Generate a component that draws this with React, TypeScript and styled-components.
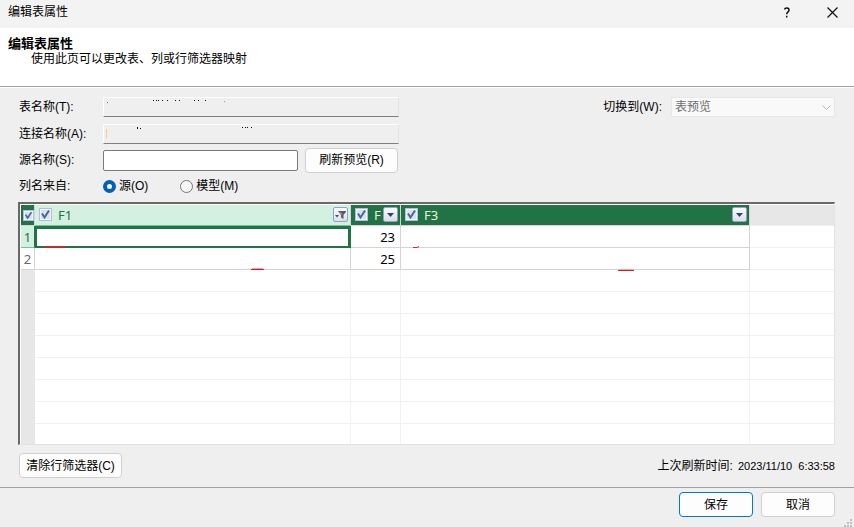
import React from "react";
import styled, { createGlobalStyle, css } from "styled-components";

const uiFont = '"Liberation Sans", "Noto Sans CJK SC", sans-serif';
const gridFont = '"Noto Sans", "Noto Sans CJK SC", sans-serif';
const green = "#217346";

const GlobalStyle = createGlobalStyle`
  *, *::before, *::after { box-sizing: border-box; }
  body { margin: 0; background: #efefef; }
  button, input, select { font: inherit; color: inherit; margin: 0; }
`;

const Dialog = styled.div`
  display: flex;
  flex-direction: column;
  height: 100vh;
  overflow: hidden;
  background: #efefef;
  color: #000;
  font: 12px/16px ${uiFont};
`;

const TitleBar = styled.header`
  display: flex;
  align-items: center;
  height: 28px;
  flex: none;
  padding: 0 10px 4px 8px;
  background: #f3f3f3;
`;

const Title = styled.span`
  flex: 1;
`;

const TitleButton = styled.button`
  display: grid;
  place-items: center;
  width: 24px;
  height: 24px;
  padding: 0;
  margin-left: 21px;
  border: 0;
  background: none;
`;

const Banner = styled.section`
  flex: none;
  height: 60px;
  padding: 8px;
  background: #fff;
  border-bottom: 1px solid #fff;
  box-shadow: inset 0 -1px #a0a0a0;
`;

const BannerTitle = styled.h1`
  margin: 0;
  font-size: 13px;
  line-height: 15px;
  font-weight: 700;
`;

const BannerText = styled.p`
  margin: 0 0 0 23px;
  line-height: 16px;
`;

const Content = styled.main`
  display: flex;
  flex-direction: column;
  flex: 1;
  min-height: 0;
  padding: 6px 19px 0 18px;
`;

const FormArea = styled.div`
  display: flex;
  justify-content: space-between;
  align-items: flex-start;
  flex: none;
  height: 108px;
`;

const Fields = styled.div`
  display: grid;
  grid-template-columns: 85px 195px 1fr;
  grid-template-rows: 26px 28px 24px 28px;
  align-items: center;
  width: 381px;
`;

const Label = styled.label`
  padding-left: 1px;
`;

const Caption = styled.span`
  padding-left: 1px;
`;

const SunkenField = styled.div`
  position: relative;
  grid-column: 2 / 4;
  height: 20px;
`;

const ReadOnlyInput = styled.input`
  display: block;
  width: 100%;
  height: 100%;
  padding: 0 4px;
  border: 1px solid #fdfdfd;
  border-bottom-color: #808080;
  border-right-color: #e4e4e4;
  background: #efefef;
  outline: none;
`;

const Remnant = styled.svg`
  position: absolute;
  left: 0;
  top: 0;
  pointer-events: none;
`;

const TextInput = styled.input`
  width: 100%;
  height: 21px;
  padding: 0 4px;
  border: 1px solid #7a7a7a;
  border-radius: 2px;
  background: #fff;
`;

const Button = styled.button<{ $primary?: boolean; $width: number }>`
  width: ${(p) => p.$width}px;
  height: 25px;
  flex: none;
  padding: 0;
  border: 1px solid ${(p) => (p.$primary ? "#0078d4" : "#d0d0d0")};
  border-radius: 4px;
  background: #fdfdfd;
  line-height: 16px;
  white-space: nowrap;
`;

const RefreshCell = styled.div`
  display: flex;
  padding-left: 7px;
`;

const Radios = styled.div`
  grid-column: 2 / 4;
  display: flex;
  gap: 32px;
`;

const RadioLabel = styled.label`
  display: flex;
  align-items: center;
  gap: 3px;
`;

const Radio = styled.input`
  appearance: none;
  width: 13px;
  height: 13px;
  border: 1px solid #767676;
  border-radius: 50%;
  background: #f6f6f6;
  &:checked {
    border: 4px solid #005fb8;
    background: #fff;
  }
`;

const SwitchTo = styled.div`
  display: flex;
  align-items: center;
  gap: 9px;
  height: 26px;
`;

const SelectBox = styled.div`
  position: relative;
  width: 164px;
  height: 20px;
`;

const Select = styled.select`
  appearance: none;
  width: 100%;
  height: 100%;
  padding: 0 3px;
  border: 1px solid #e8e8e8;
  background: #f9f9f9;
  color: #6d6d6d;
  opacity: 1;
`;

const SelectArrow = styled.svg`
  position: absolute;
  right: 4px;
  top: 8px;
  pointer-events: none;
`;

const GridFrame = styled.div`
  flex: 1;
  min-height: 0;
  overflow: hidden;
  border: 1px solid #e3e3e3;
  border-top: 2px solid #696969;
  border-left: 2px solid #696969;
  padding: 1px 0 0 1px;
  background: #fff;
`;

const Table = styled.table`
  width: 100%;
  table-layout: fixed;
  border-collapse: separate;
  border-spacing: 0;
  font: 13px/18px ${gridFont};
`;

const Col = styled.col<{ $width?: number }>`
  ${(p) => p.$width && css`width: ${p.$width}px;`}
`;

const HeadCell = styled.th<{ $active?: boolean }>`
  height: 21px;
  padding: 0 2px 0 4px;
  border-right: 1px solid #d4d4d4;
  border-bottom: 1px solid ${(p) => (p.$active ? "#6fc597" : "#d4d4d4")};
  background: ${(p) => (p.$active ? "#d3f0e0" : green)};
  color: ${(p) => (p.$active ? green : "#e8f6d8")};
  font-weight: 400;
  text-align: left;
`;

const CornerCell = styled(HeadCell)`
  padding: 0;
`;

const EmptyHead = styled.td`
  background: #e7e7e7;
  border-bottom: 1px solid #efefef;
`;

const HeadInner = styled.div`
  display: flex;
  align-items: center;
  height: 20px;
  padding-bottom: 1px;
`;

const HeadLabel = styled.label`
  display: flex;
  align-items: center;
  flex: 1;
  gap: 6px;
`;

const CornerLabel = styled.div`
  display: flex;
  justify-content: flex-end;
`;

const CheckWrap = styled.span<{ $small?: boolean }>`
  position: relative;
  display: block;
  flex: none;
  width: ${(p) => (p.$small ? 11 : 13)}px;
  height: ${(p) => (p.$small ? 11 : 13)}px;
`;

const CheckInput = styled.input`
  appearance: none;
  display: block;
  width: 100%;
  height: 100%;
  border: 1px solid #b0bfe0;
  background: #dde2ea;
  box-shadow: inset 0 0 0 1px #f2f4fa;
`;

const CheckMark = styled.svg`
  position: absolute;
  inset: 0;
  width: 100%;
  height: 100%;
  pointer-events: none;
`;

const FilterButton = styled.button`
  display: grid;
  place-items: center;
  flex: none;
  width: 15px;
  height: 15px;
  padding: 0;
  border: 1px solid #8fa3c4;
  border-radius: 2px;
  background: linear-gradient(#fbfbfd, #dcdfe6);
`;

const RowHead = styled.th<{ $state?: "active" | "empty" }>`
  height: 22px;
  padding: 0;
  border-right: 1px solid #d4d4d4;
  border-bottom: 1px solid #d4d4d4;
  background: #fff;
  color: #6a6a6a;
  font-weight: 400;
  text-align: center;
  ${(p) =>
    p.$state === "active" &&
    css`
      background: #d3f0e0;
      color: ${green};
      border-bottom-color: #6fc597;
      border-right-color: ${green};
    `}
  ${(p) =>
    p.$state === "empty" &&
    css`
      background: #e7e7e7;
      border-color: #e7e7e7;
    `}
`;

const Cell = styled.td<{ $selected?: boolean; $faint?: boolean }>`
  position: relative;
  height: 22px;
  padding: 0 5px;
  text-align: right;
  border-right: 1px solid ${(p) => (p.$faint ? "#f1f1f1" : "#d4d4d4")};
  border-bottom: 1px solid ${(p) => (p.$faint ? "#f1f1f1" : "#d4d4d4")};
  &:last-child { border-right: 0; }
  ${(p) =>
    p.$selected &&
    css`
      border: 3px solid ${green};
      border-left-width: 2px;
      border-bottom-width: 2px;
    `}
`;

const Mark = styled.svg<{ $x: number; $y: number }>`
  position: absolute;
  left: ${(p) => p.$x}px;
  top: ${(p) => p.$y}px;
  z-index: 1;
`;

const StatusRow = styled.div`
  display: flex;
  align-items: center;
  justify-content: space-between;
  flex: none;
  height: 42px;
  padding: 0 0 1px 1px;
`;

const Status = styled.div`
  display: flex;
  gap: 5px;
`;

const Time = styled.time`
  font-size: 11px;
`;

const Footer = styled.footer`
  position: relative;
  display: flex;
  justify-content: flex-end;
  gap: 8px;
  flex: none;
  height: 40px;
  padding: 4px 19px 0;
  border-top: 1px solid #a0a0a0;
`;

const Grip = styled.svg`
  position: absolute;
  right: 0;
  bottom: 0;
`;

function Check({ small, id, label }: { small?: boolean; id: string; label: string }) {
  return (
    <CheckWrap $small={small}>
      <CheckInput type="checkbox" id={id} aria-label={label} defaultChecked />
      <CheckMark viewBox="0 0 13 13" aria-hidden="true">
        <path d="M3 5.500l2.500 4L10 2.500" fill="none" stroke="#41699f" strokeWidth="2" />
      </CheckMark>
    </CheckWrap>
  );
}

function ColumnHead({ name, active }: { name: string; active?: boolean }) {
  return (
    <HeadCell $active={active} scope="col">
      <HeadInner>
        <HeadLabel>
          <Check id={"col-" + name} label={name} />
          {name}
        </HeadLabel>
        <FilterButton aria-label={"筛选 " + name}>
          {active ? (
            <svg width="13" height="13" viewBox="0 0 13 13" aria-hidden="true">
              <path d="M1 7h4L3 9.500z" fill="#2b4fa0" />
              <path d="M4 3h8v1L9.500 7v4L7 9.500V7z" fill="#5c5c5c" />
              <path d="M6 4.500l2 2" stroke="#c8c8c8" />
            </svg>
          ) : (
            <svg width="7" height="4" viewBox="0 0 7 4" aria-hidden="true">
              <path d="M0 0h7L3.500 4z" fill="#33436e" />
            </svg>
          )}
        </FilterButton>
      </HeadInner>
    </HeadCell>
  );
}

const emptyRows = [3, 4, 5, 6, 7, 8, 9, 10];

export default function App() {
  return (
    <>
      <GlobalStyle />
      <Dialog role="dialog" aria-label="编辑表属性">
        <TitleBar>
          <Title>编辑表属性</Title>
          <TitleButton aria-label="帮助">
            <svg width="8" height="11" viewBox="0 0 8 11" aria-hidden="true">
              <path d="M1.500 2.500C2 .5 6 .5 6 3S3.700 4.800 3.700 7.300M3.700 8.800v1.700" fill="none" stroke="#111" strokeWidth="1.500" />
            </svg>
          </TitleButton>
          <TitleButton aria-label="关闭">
            <svg width="11" height="11" viewBox="0 0 11 11" aria-hidden="true">
              <path d="M.5.5l10 10M10.500.5l-10 10" stroke="#111" strokeWidth="1.200" />
            </svg>
          </TitleButton>
        </TitleBar>
        <Banner>
          <BannerTitle>编辑表属性</BannerTitle>
          <BannerText>使用此页可以更改表、列或行筛选器映射</BannerText>
        </Banner>
        <Content>
          <FormArea>
            <Fields>
              <Label htmlFor="table-name">表名称(T):</Label>
              <SunkenField>
                <ReadOnlyInput id="table-name" readOnly />
                <Remnant width="130" height="20" aria-hidden="true">
                  <path d="M50 3.500h1m2 0h1m1 0h1m3 0h1m4 0h1m7 0h1m3 0h1m14 0h1m3 0h1m6 0h1" stroke="#111" />
                  <path d="M4 5.500h1" stroke="#b0502a" />
                  <path d="M121 4.500h1" stroke="#a0a0a0" />
                </Remnant>
              </SunkenField>
              <Label htmlFor="connection-name">连接名称(A):</Label>
              <SunkenField>
                <ReadOnlyInput id="connection-name" readOnly />
                <Remnant width="160" height="20" aria-hidden="true">
                  <path d="M34.500 3v2M37 4.500h1M139 3.500h1m2 0h1m1 0h1m3 0h1" stroke="#111" />
                  <path d="M3.500 5v9" stroke="#f3cc8b" />
                </Remnant>
              </SunkenField>
              <Label htmlFor="source-name">源名称(S):</Label>
              <TextInput id="source-name" />
              <RefreshCell>
                <Button $width={93}>刷新预览(R)</Button>
              </RefreshCell>
              <Caption id="names-from">列名来自:</Caption>
              <Radios role="radiogroup" aria-labelledby="names-from">
                <RadioLabel>
                  <Radio type="radio" name="names" defaultChecked />
                  源(O)
                </RadioLabel>
                <RadioLabel>
                  <Radio type="radio" name="names" />
                  模型(M)
                </RadioLabel>
              </Radios>
            </Fields>
            <SwitchTo>
              <label htmlFor="switch-to">切换到(W):</label>
              <SelectBox>
                <Select id="switch-to" disabled>
                  <option>表预览</option>
                </Select>
                <SelectArrow width="9" height="6" viewBox="0 0 9 6" aria-hidden="true">
                  <path d="M.5.5l4 4 4-4" fill="none" stroke="#b5b5b5" />
                </SelectArrow>
              </SelectBox>
            </SwitchTo>
          </FormArea>
          <GridFrame>
            <Table>
              <colgroup>
                <Col $width={14} />
                <Col $width={316} />
                <Col $width={50} />
                <Col $width={349} />
                <Col />
              </colgroup>
              <thead>
                <tr>
                  <CornerCell>
                    <CornerLabel>
                      <Check small id="col-all" label="全选" />
                    </CornerLabel>
                  </CornerCell>
                  <ColumnHead name="F1" active />
                  <ColumnHead name="F" />
                  <ColumnHead name="F3" />
                  <EmptyHead />
                </tr>
              </thead>
              <tbody>
                <tr>
                  <RowHead scope="row" $state="active">1</RowHead>
                  <Cell $selected>
                    <Mark $x={7} $y={16} width="22" height="3" aria-hidden="true">
                      <path d="M1 1.500h20" stroke="#d8242a" />
                      <path d="M0 2.500h22" stroke="#b0302a" />
                    </Mark>
                  </Cell>
                  <Cell>23</Cell>
                  <Cell>
                    <Mark $x={12} $y={20} width="6" height="3" aria-hidden="true">
                      <path d="M0 1.500h4l2 -1" fill="none" stroke="#d8242a" />
                    </Mark>
                  </Cell>
                  <Cell $faint />
                </tr>
                <tr>
                  <RowHead scope="row">2</RowHead>
                  <Cell>
                    <Mark $x={216} $y={20} width="13" height="3" aria-hidden="true">
                      <path d="M1 .5h11" stroke="#f0a0a0" />
                      <path d="M0 1.500h13" stroke="#e01b24" />
                    </Mark>
                  </Cell>
                  <Cell>25</Cell>
                  <Cell>
                    <Mark $x={217} $y={21} width="16" height="3" aria-hidden="true">
                      <path d="M1 .5h14" stroke="#f0a0a0" />
                      <path d="M0 1.500h16" stroke="#e01b24" />
                    </Mark>
                  </Cell>
                  <Cell $faint />
                </tr>
                {emptyRows.map((n) => (
                  <tr key={n}>
                    <RowHead $state="empty" aria-label={"空行 " + n} />
                    <Cell $faint />
                    <Cell $faint />
                    <Cell $faint />
                    <Cell $faint />
                  </tr>
                ))}
              </tbody>
            </Table>
          </GridFrame>
          <StatusRow>
            <Button $width={103}>清除行筛选器(C)</Button>
            <Status>
              <span>上次刷新时间:</span>
              <Time dateTime="2023-11-10T06:33:58">2023/11/10&nbsp; 6:33:58</Time>
            </Status>
          </StatusRow>
        </Content>
        <Footer>
          <Button $width={74} $primary>保存</Button>
          <Button $width={74}>取消</Button>
          <Grip width="10" height="8" viewBox="0 0 10 8" aria-hidden="true">
            <path d="M6 0h2v2H6zM3 3h2v2H3zM6 3h2v2H6zM0 6h2v2H0zM3 6h2v2H3zM6 6h2v2H6z" fill="#bdbdbd" />
          </Grip>
        </Footer>
      </Dialog>
    </>
  );
}
